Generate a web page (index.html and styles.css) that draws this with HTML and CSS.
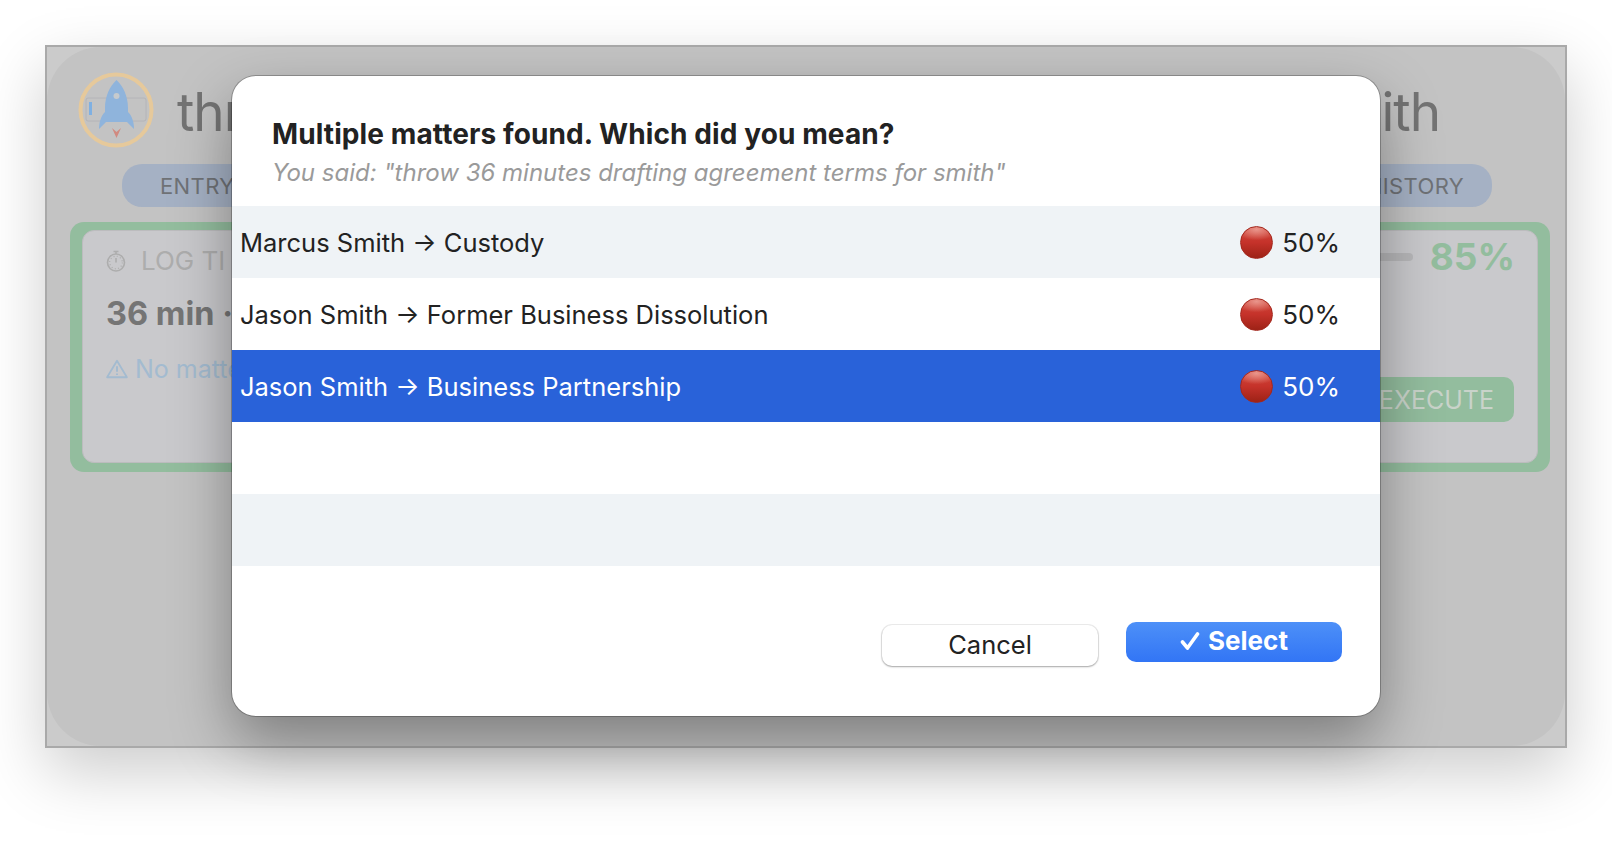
FILE: index.html
```html
<!DOCTYPE html>
<html lang="en">
<head>
    <meta charset="UTF-8">
    <meta name="viewport" content="width=device-width, initial-scale=1.0">
    <title>Multiple matters found</title>
    <link rel="stylesheet" href="styles.css">
</head>
<body>
    <!-- Dimmed app window behind the sheet -->
    <div class="window">
        <div class="window-inner">
            <header class="app-header">
                <svg class="logo" viewBox="0 0 76 76" width="76" height="76" aria-hidden="true">
                    <circle cx="38" cy="38" r="35.500" fill="none" stroke="#e6c99b" stroke-width="4"/>
                    <rect x="8" y="26" width="60" height="23" rx="2" fill="none" stroke="#b4b4b8" stroke-width="1"/>
                    <rect x="11" y="30" width="3" height="13" fill="#7fb0e2"/>
                    <path d="M38.500 8 C45 14 50 24 50 36 L50 40 C54 44 56 50 56 57 L49 50 L28 50 L21 57 C21 50 23 44 27 40 L27 36 C27 24 32 14 38.500 8 Z" fill="#8fb4dc"/>
                    <circle cx="38.500" cy="24" r="3" fill="#c6cacd"/>
                    <path d="M34 56 L38.500 60 L43 56 L38.500 66 Z" fill="#d18a80"/>
                </svg>
                <h1 class="app-title">
                    <span>thr</span>
                    <span>ith</span>
                </h1>
            </header>

            <nav class="tabs">
                <span class="tab">ENTRY</span>
                <span class="tab">HISTORY</span>
            </nav>

            <section class="card-frame">
                <div class="card">
                    <div class="card-main">
                        <div class="log-line">
                            <svg class="timer" viewBox="0 0 20 22" width="20" height="22" aria-hidden="true">
                                <circle cx="10" cy="12.500" r="8.500" fill="none" stroke="#adadad" stroke-width="1.600"/>
                                <circle cx="10" cy="12.500" r="6.300" fill="none" stroke="#adadad" stroke-width="1.200" stroke-dasharray="1 2.300"/>
                                <path d="M7.500 1.500 H12.500 M10 1.500 V4 M10 8 V12.500" fill="none" stroke="#adadad" stroke-width="1.600"/>
                            </svg>
                            <span>LOG TI</span>
                        </div>
                        <div class="summary">36 min ·</div>
                        <div class="warning">
                            <svg viewBox="0 0 20 18" width="22" height="20" aria-hidden="true">
                                <path d="M10 1.500 L19 16.500 H1 Z" fill="none" stroke="#a3bbd0" stroke-width="1.600" stroke-linejoin="round"/>
                                <path d="M10 6.500 V11.500 M10 13 V14.500" fill="none" stroke="#a3bbd0" stroke-width="1.800"/>
                            </svg>
                            <span>No matte</span>
                        </div>
                    </div>
                    <div class="card-side">
                        <div class="confidence">
                            <div class="meter"></div>
                            <span class="percent">85%</span>
                        </div>
                        <button class="execute">EXECUTE</button>
                    </div>
                </div>
            </section>
        </div>
    </div>

    <!-- Sheet -->
    <div class="dialog">
        <div class="dialog-head">
            <h2>Multiple matters found. Which did you mean?</h2>
            <p>You said: "throw 36 minutes drafting agreement terms for smith"</p>
        </div>

        <div class="rows">
            <div class="row">
                <span>Marcus Smith → Custody</span>
                <span class="score"><i class="dot"></i>50%</span>
            </div>
            <div class="row">
                <span>Jason Smith → Former Business Dissolution</span>
                <span class="score"><i class="dot"></i>50%</span>
            </div>
            <div class="row selected">
                <span>Jason Smith → Business Partnership</span>
                <span class="score"><i class="dot"></i>50%</span>
            </div>
            <div class="row"></div>
            <div class="row"></div>
        </div>

        <div class="actions">
            <button class="btn-cancel">Cancel</button>
            <button class="btn-select">
                <svg viewBox="0 0 20 20" width="20" height="20" aria-hidden="true">
                    <path d="M2.500 11 L7.500 17 L17.500 3" fill="none" stroke="#fff" stroke-width="3.600" stroke-linecap="round" stroke-linejoin="round"/>
                </svg>
                Select
            </button>
        </div>
    </div>
</body>
</html>
```

FILE: styles.css
```css
* {
    box-sizing: border-box;
}
html, body {
    height: 100%;
}
body {
    margin: 0;
    padding: 45px;
    background: white;
    font-family: Inter, "Liberation Sans", sans-serif;
    overflow: hidden;
}

/* Window behind the sheet */
.window {
    width: 1522px;
    height: 703px;
    background: #cbcbcb;
    border: 2px solid #a9a9a9;
    box-shadow: 0 24px 60px rgba(0, 0, 0, 0.2);
}
.window-inner {
    height: 100%;
    padding: 25px 15px 0 23px;
    background: #c3c3c3;
    border-radius: 54px;
}
.app-header {
    display: flex;
    align-items: center;
    gap: 23px;
    padding-left: 8px;
    height: 76px;
}
.logo {
    flex: none;
}
.app-title {
    display: flex;
    justify-content: space-between;
    flex: 1;
    margin: 0;
    padding: 4px 110px 0 0;
    font-size: 53px;
    font-weight: 400;
    letter-spacing: -1px;
    color: #737373;
    white-space: nowrap;
}
.tabs {
    display: flex;
    justify-content: space-between;
    align-items: center;
    margin: 16px 58px 0 52px;
    height: 43px;
    padding: 0 28px 0 38px;
    background: #a5b1c4;
    border-radius: 20px;
    font-size: 22px;
    letter-spacing: 0.4px;
    color: #6f7276;
}
.card-frame {
    margin: 15px 0 0 0;
    width: 1480px;
    height: 250px;
    padding: 8px 12px 9px;
    background: #93bd9e;
    border-radius: 14px;
}
.card {
    display: flex;
    justify-content: space-between;
    height: 100%;
    padding: 14px 23px 40px 23px;
    background: #c9c9cc;
    border: 1px solid #bcbcbe;
    border-radius: 12px;
}
.card-main {
    white-space: nowrap;
}
.log-line {
    display: flex;
    align-items: center;
    gap: 15px;
    font-size: 26px;
    color: #adadad;
}
.log-line .timer {
    flex: none;
}
.summary {
    margin-top: 18px;
    font-size: 32.500px;
    font-weight: 700;
    color: #757575;
}
.warning {
    display: flex;
    align-items: center;
    gap: 7px;
    margin-top: 21px;
    font-size: 25px;
    color: #a3bbd0;
}
.warning svg {
    flex: none;
}
.card-side {
    display: flex;
    flex-direction: column;
    justify-content: space-between;
    align-items: flex-end;
}
.confidence {
    display: flex;
    align-items: center;
    gap: 17px;
}
.meter {
    width: 300px;
    height: 8px;
    background: #b7b7b9;
    border-radius: 4px;
}
.percent {
    margin-right: -1px;
    font-size: 37px;
    line-height: 24px;
    font-weight: 700;
    color: #93bd9e;
}
.execute {
    height: 45px;
    width: 175px;
    padding: 0 20px 0 0;
    text-align: right;
    border: none;
    border-radius: 10px;
    background: #93bd9e;
    color: #c9d3ca;
    font: 25px Inter, "Liberation Sans", sans-serif;
}

/* Sheet over the window */
.dialog {
    position: absolute;
    top: 76px;
    left: 232px;
    width: 1148px;
    height: 640px;
    background: white;
    border-radius: 24px;
    box-shadow: 0 0 0 1px rgba(0, 0, 0, 0.25), 0 25px 60px rgba(0, 0, 0, 0.36);
    overflow: hidden;
}
.dialog-head {
    padding: 41px 40px 0;
    height: 130px;
}
.dialog-head h2 {
    margin: 0;
    font-size: 28px;
    line-height: 34px;
    font-weight: 700;
    letter-spacing: 0.1px;
    color: #222;
}
.dialog-head p {
    margin: 7px 0 0;
    font-size: 24px;
    line-height: 30px;
    font-style: italic;
    color: #9a9a9a;
}
.row {
    display: flex;
    justify-content: space-between;
    align-items: center;
    height: 72px;
    padding: 0 40px 0 8px;
    font-size: 25.500px;
    color: #222;
}
.row:nth-child(odd) {
    background: #eff3f6;
}
.row.selected {
    background: #2962d9;
    color: white;
}
.score {
    display: flex;
    align-items: center;
    gap: 9px;
    font-size: 26px;
}
.dot {
    display: block;
    width: 33px;
    height: 33px;
    border-radius: 50%;
    border: 1px solid #a3281e;
    background: radial-gradient(ellipse 70% 35% at 50% 8%, #e9958b, rgba(233, 149, 139, 0) 100%),
        linear-gradient(to bottom, #d2493c, #c5322a 50%, #9d2216);
}
.actions {
    display: flex;
    justify-content: flex-end;
    gap: 28px;
    align-items: flex-start;
    padding: 56px 38px 0 0;
}
.btn-cancel, .btn-select {
    width: 216px;
    border: none;
    font-family: inherit;
}
.btn-cancel {
    height: 41px;
    margin-top: 3px;
    padding-bottom: 3px;
    background: white;
    color: #222;
    font-size: 25.500px;
    border-radius: 10px;
    box-shadow: 0 0 0 1px rgba(0, 0, 0, 0.07), 0 1px 2px rgba(0, 0, 0, 0.3);
}
.btn-select {
    display: flex;
    justify-content: center;
    align-items: center;
    gap: 8px;
    height: 40px;
    padding-bottom: 4px;
    background: linear-gradient(to bottom, #4d90f8, #3275f5);
    color: white;
    font-size: 26px;
    font-weight: 700;
    border-radius: 10px;
}
```
